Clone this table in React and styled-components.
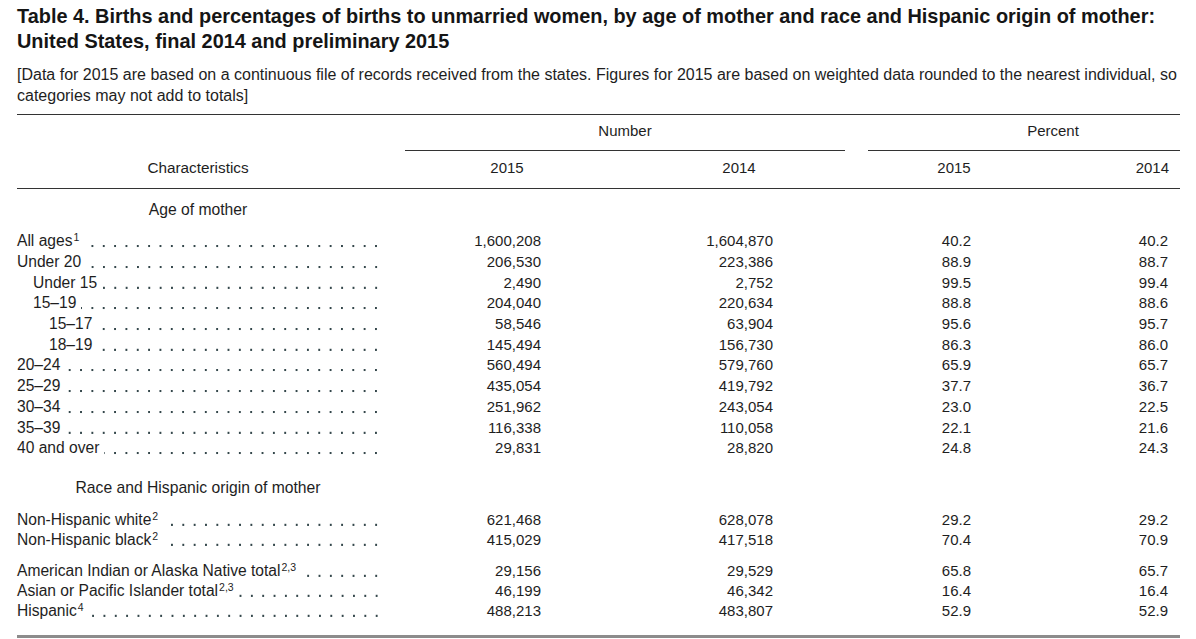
import React from "react";
import styled, { createGlobalStyle } from "styled-components";

const GlobalStyle = createGlobalStyle`
  html, body { overflow: hidden; }
  body {
    margin: 0;
    background: #fff;
    color: #1e1e1e;
    font-family: "Liberation Sans", Arial, sans-serif;
  }
`;

const COLS = "374px 232px 232px 198px 127px";

const Page = styled.div`
  width: 1163px;
  padding: 4px 16px 0 17px;
`;

const Title = styled.h1`
  margin: 0;
  font-size: 19.9px;
  font-weight: bold;
  line-height: 25px;
  color: #151515;
  white-space: nowrap;
`;

const Note = styled.p`
  margin: 10px 0 0;
  font-size: 16px;
  line-height: 21px;
  white-space: nowrap;
`;

const Table = styled.div`
  margin-top: 7.5px;
  border-top: 1px solid #333;
  border-bottom: 3px solid #8c8c8c;
  padding-bottom: 14px;
  font-size: 15px;
`;

const Head = styled.div`
  display: grid;
  grid-template-columns: ${COLS};
  border-bottom: 1px solid #333;
  line-height: 20px;
`;

const StubHead = styled.div`
  grid-row: 1 / 3;
  grid-column: 1;
  align-self: end;
  padding: 0 12px 10px 0;
  text-align: center;
  font-size: 15.3px;
`;

const Spanner = styled.div`
  grid-row: 1;
  grid-column: ${(p) => p.$cols};
  margin: 0 ${(p) => p.$mr}px 0 ${(p) => p.$ml}px;
  padding: 6px 0 9px ${(p) => p.$pl || 0}px;
  text-align: center;
  border-bottom: 1px solid #333;
`;

const Year = styled.div`
  grid-row: 2;
  grid-column: ${(p) => p.$col};
  padding: 7px ${(p) => (p.$last ? "11px" : "0")} 10px 0;
  text-align: ${(p) => (p.$last ? "right" : "center")};
`;

const SectionHead = styled.div`
  margin-top: ${(p) => p.$top}px;
  width: 374px;
  box-sizing: border-box;
  padding-right: 12px;
  text-align: center;
  line-height: 20.7px;
  font-size: 15.7px;
`;

const Group = styled.div`
  margin-top: ${(p) => p.$top}px;
`;

const Row = styled.div`
  display: grid;
  grid-template-columns: ${COLS};
  line-height: ${(p) => p.$pitch}px;
`;

const Label = styled.div`
  display: flex;
  padding: 0 9px 0 ${(p) => p.$indent * 16}px;
  white-space: nowrap;
  font-size: 15.6px;
`;

const Leader = styled.span`
  flex: 1;
  margin-left: 5px;
  background-image: radial-gradient(
    circle at 50% calc(50% + 4.7px),
    #34474b 0 0.9px,
    transparent 1.4px
  );
  background-size: 11.35px 100%;
  background-position: right 0 top 0;
  background-repeat: repeat-x;
`;

const Sup = styled.sup`
  font-size: 10.5px;
  line-height: 0;
  vertical-align: 5px;
  margin-left: 1px;
`;

const Num = styled.div`
  text-align: right;
  padding-right: ${(p) => (p.$last ? 12 : 82)}px;
`;

const ages = [
  ["All ages", "1", 0, "1,600,208", "1,604,870", "40.2", "40.2"],
  ["Under 20", null, 0, "206,530", "223,386", "88.9", "88.7"],
  ["Under 15", null, 1, "2,490", "2,752", "99.5", "99.4"],
  ["15–19", null, 1, "204,040", "220,634", "88.8", "88.6"],
  ["15–17", null, 2, "58,546", "63,904", "95.6", "95.7"],
  ["18–19", null, 2, "145,494", "156,730", "86.3", "86.0"],
  ["20–24", null, 0, "560,494", "579,760", "65.9", "65.7"],
  ["25–29", null, 0, "435,054", "419,792", "37.7", "36.7"],
  ["30–34", null, 0, "251,962", "243,054", "23.0", "22.5"],
  ["35–39", null, 0, "116,338", "110,058", "22.1", "21.6"],
  ["40 and over", null, 0, "29,831", "28,820", "24.8", "24.3"],
];

const race1 = [
  ["Non-Hispanic white", "2", 0, "621,468", "628,078", "29.2", "29.2"],
  ["Non-Hispanic black", "2", 0, "415,029", "417,518", "70.4", "70.9"],
];

const race2 = [
  ["American Indian or Alaska Native total", "2,3", 0, "29,156", "29,529", "65.8", "65.7"],
  ["Asian or Pacific Islander total", "2,3", 0, "46,199", "46,342", "16.4", "16.4"],
  ["Hispanic", "4", 0, "488,213", "483,807", "52.9", "52.9"],
];

const DataRows = ({ rows, pitch }) =>
  rows.map(([label, note, indent, a, b, c, d]) => (
    <Row key={label} $pitch={pitch}>
      <Label $indent={indent}>
        <span>
          {label}
          {note && <Sup>{note}</Sup>}
        </span>
        <Leader />
      </Label>
      <Num>{a}</Num>
      <Num>{b}</Num>
      <Num>{c}</Num>
      <Num $last>{d}</Num>
    </Row>
  ));

export default function App() {
  return (
    <>
      <GlobalStyle />
      <Page>
        <Title>
          Table 4. Births and percentages of births to unmarried women, by age of mother and race and Hispanic origin of mother:
          <br />
          United States, final 2014 and preliminary 2015
        </Title>
        <Note>
          [Data for 2015 are based on a continuous file of records received from the states. Figures for 2015 are based on weighted data rounded to the nearest individual, so
          <br />
          categories may not add to totals]
        </Note>
        <Table>
          <Head>
            <StubHead>Characteristics</StubHead>
            <Spanner $cols="2 / 4" $ml={14} $mr={10}>Number</Spanner>
            <Spanner $cols="4 / 6" $ml={13} $mr={0} $pl={58}>Percent</Spanner>
            <Year $col={2}>2015</Year>
            <Year $col={3}>2014</Year>
            <Year $col={4}>2015</Year>
            <Year $col={5} $last>2014</Year>
          </Head>
          <SectionHead $top={11}>Age of mother</SectionHead>
          <Group $top={11}>
            <DataRows rows={ages} pitch={20.7} />
          </Group>
          <SectionHead $top={19.3}>Race and Hispanic origin of mother</SectionHead>
          <Group $top={11.3}>
            <DataRows rows={race1} pitch={20} />
          </Group>
          <Group $top={11}>
            <DataRows rows={race2} pitch={20} />
          </Group>
        </Table>
      </Page>
    </>
  );
}
